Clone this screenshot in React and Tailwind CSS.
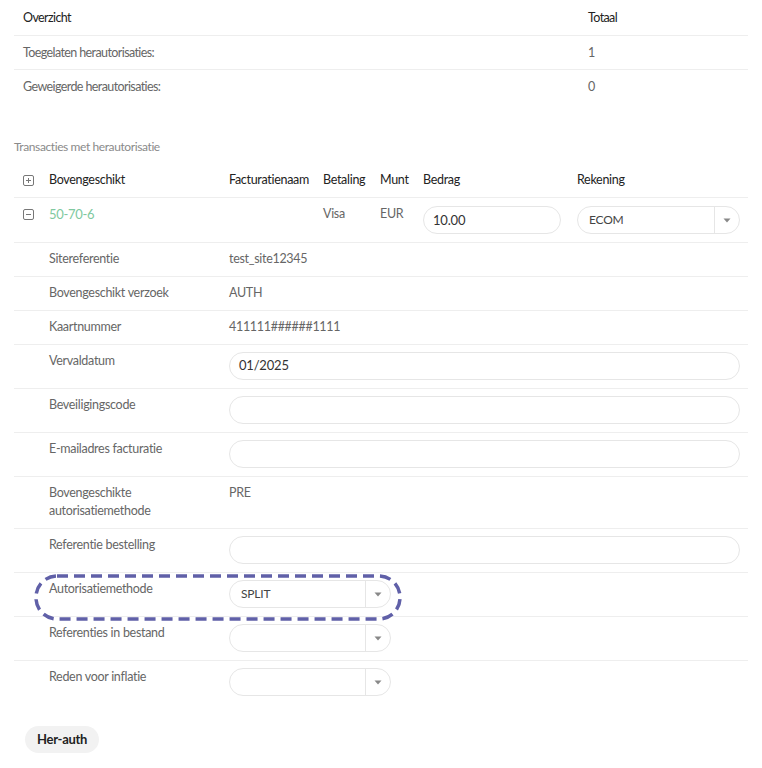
import React from 'react';

const font = { fontFamily: 'Lato, "Open Sans", sans-serif' };

const Chevron = () => (
  <svg width="8" height="5" viewBox="0 0 8 5" className="text-[#888]">
    <path d="M0.5 0.5 L4 4.5 L7.5 0.5 Z" fill="currentColor" />
  </svg>
);

const Select = ({ value, className = '' }) => (
  <div className={`flex h-[28px] items-center rounded-full border border-[#e6e6e6] bg-white ${className}`}>
    <span className="flex-1 pl-[11px] text-[12px] tracking-[-0.2px] text-[#444]">{value}</span>
    <span className="flex h-full w-[25px] items-center justify-center border-l border-[#e6e6e6]">
      <Chevron />
    </span>
  </div>
);

const TextInput = ({ value = '', className = '' }) => (
  <div className={`flex h-[28px] items-center rounded-full border border-[#e6e6e6] bg-white pl-[9px] text-[13px] tracking-[-0.2px] text-[#333] ${className}`}>
    {value}
  </div>
);

const BoxIcon = ({ minus }) => (
  <svg width="11" height="11" viewBox="0 0 11 11" className="text-[#777]">
    <rect x="0.5" y="0.5" width="10" height="10" rx="1.5" fill="none" stroke="currentColor" />
    <path d="M3 5.5 H8" stroke="currentColor" />
    {!minus && <path d="M5.5 3 V8" stroke="currentColor" />}
  </svg>
);

const cols = 'grid grid-cols-[26px_180px_94px_57px_43px_154px_180px]';

const DetailRow = ({ label, children, last }) => (
  <div className={`${cols} ${last ? '' : 'border-b border-[#eeeeee]'}`}>
    <div />
    <div className="pl-[9px] pt-[7px] pb-[8px] text-[12.5px] leading-[18px] tracking-[-0.3px] text-[#666]">{label}</div>
    <div className="col-span-5 pl-[9px] pr-[8px]">{children}</div>
  </div>
);

const TextVal = ({ children }) => (
  <div className="pt-[7px] text-[12.5px] leading-[18px] tracking-[-0.3px] text-[#666]">{children}</div>
);

const InputVal = ({ children }) => <div className="pt-[7px] pb-[8px]">{children}</div>;

export default function App() {
  return (
    <div className="min-h-screen bg-white px-[14px]" style={font}>
      {/* Overzicht */}
      <div className="grid grid-cols-[565px_169px] text-[12.5px] leading-[18px] tracking-[-0.6px]">
        <div className="border-b border-[#eeeeee] pl-[9px] pt-[9px] pb-[8px] text-[#222]">Overzicht</div>
        <div className="border-b border-[#eeeeee] pl-[9px] pt-[9px] pb-[8px] text-[#222]">Totaal</div>
        <div className="border-b border-[#eeeeee] pl-[9px] pt-[8px] pb-[7px] text-[#666]">Toegelaten herautorisaties:</div>
        <div className="border-b border-[#eeeeee] pl-[9px] pt-[8px] pb-[7px] text-[#666]">1</div>
        <div className="pl-[9px] pt-[8px] pb-[8px] text-[#666]">Geweigerde herautorisaties:</div>
        <div className="pl-[9px] pt-[8px] pb-[8px] text-[#666]">0</div>
      </div>

      <div className="mt-[36px] mb-[9px] text-[12px] leading-[14px] tracking-[-0.4px] text-[#8a8a8a]">Transacties met herautorisatie</div>

      {/* header */}
      <div className={`${cols} border-b border-[#eeeeee] text-[12.5px] leading-[18px] tracking-[-0.3px] text-[#222]`}>
        <div className="flex items-center pl-[9px]"><BoxIcon /></div>
        <div className="pl-[9px] pt-[8px] pb-[8px]">Bovengeschikt</div>
        <div className="pl-[9px] pt-[8px] pb-[8px]">Facturatienaam</div>
        <div className="pl-[9px] pt-[8px] pb-[8px]">Betaling</div>
        <div className="pl-[9px] pt-[8px] pb-[8px]">Munt</div>
        <div className="pl-[9px] pt-[8px] pb-[8px]">Bedrag</div>
        <div className="pl-[9px] pt-[8px] pb-[8px]">Rekening</div>
      </div>

      {/* main row */}
      <div className={`${cols} border-b border-[#eeeeee] text-[12.5px] leading-[18px] tracking-[-0.3px] text-[#666]`}>
        <div className="pl-[9px] pt-[11px]"><BoxIcon minus /></div>
        <div className="pl-[9px] pt-[7px] text-[13px] text-[#7fc9a0]">50-70-6</div>
        <div />
        <div className="pl-[9px] pt-[7px]">Visa</div>
        <div className="pl-[9px] pt-[7px]">EUR</div>
        <div className="pl-[9px] pr-[7px] pt-[8px] pb-[8px]"><TextInput value="10.00" /></div>
        <div className="pl-[9px] pr-[8px] pt-[8px] pb-[8px]"><Select value="ECOM" /></div>
      </div>

      <DetailRow label="Sitereferentie"><TextVal>test_site12345</TextVal></DetailRow>
      <DetailRow label="Bovengeschikt verzoek"><TextVal>AUTH</TextVal></DetailRow>
      <DetailRow label="Kaartnummer"><TextVal>411111######1111</TextVal></DetailRow>
      <DetailRow label="Vervaldatum"><InputVal><TextInput value="01/2025" /></InputVal></DetailRow>
      <DetailRow label="Beveiligingscode"><InputVal><TextInput /></InputVal></DetailRow>
      <DetailRow label="E-mailadres facturatie"><InputVal><TextInput /></InputVal></DetailRow>
      <DetailRow label={<>Bovengeschikte<br />autorisatiemethode</>}><TextVal>PRE</TextVal></DetailRow>
      <DetailRow label="Referentie bestelling"><InputVal><TextInput /></InputVal></DetailRow>
      <div className="relative">
        <DetailRow label="Autorisatiemethode"><InputVal><Select value="SPLIT" className="w-[162px]" /></InputVal></DetailRow>
        <svg className="pointer-events-none absolute left-[20px] top-[1px]" width="368" height="47" viewBox="0 0 368 47">
          <rect x="2" y="2" width="364" height="43" rx="21" fill="none" stroke="#6060a8" strokeWidth="3.5" strokeDasharray="11 6" />
        </svg>
      </div>
      <DetailRow label="Referenties in bestand"><InputVal><Select value="" className="w-[162px]" /></InputVal></DetailRow>
      <DetailRow label="Reden voor inflatie" last><InputVal><Select value="" className="w-[162px]" /></InputVal></DetailRow>

      <div className="mt-[22px] pl-[11px]">
        <button className="h-[27px] rounded-full bg-[#f2f2f2] px-[12px] text-[13px] font-bold tracking-[-0.3px] text-[#222]">Her-auth</button>
      </div>
    </div>
  );
}
